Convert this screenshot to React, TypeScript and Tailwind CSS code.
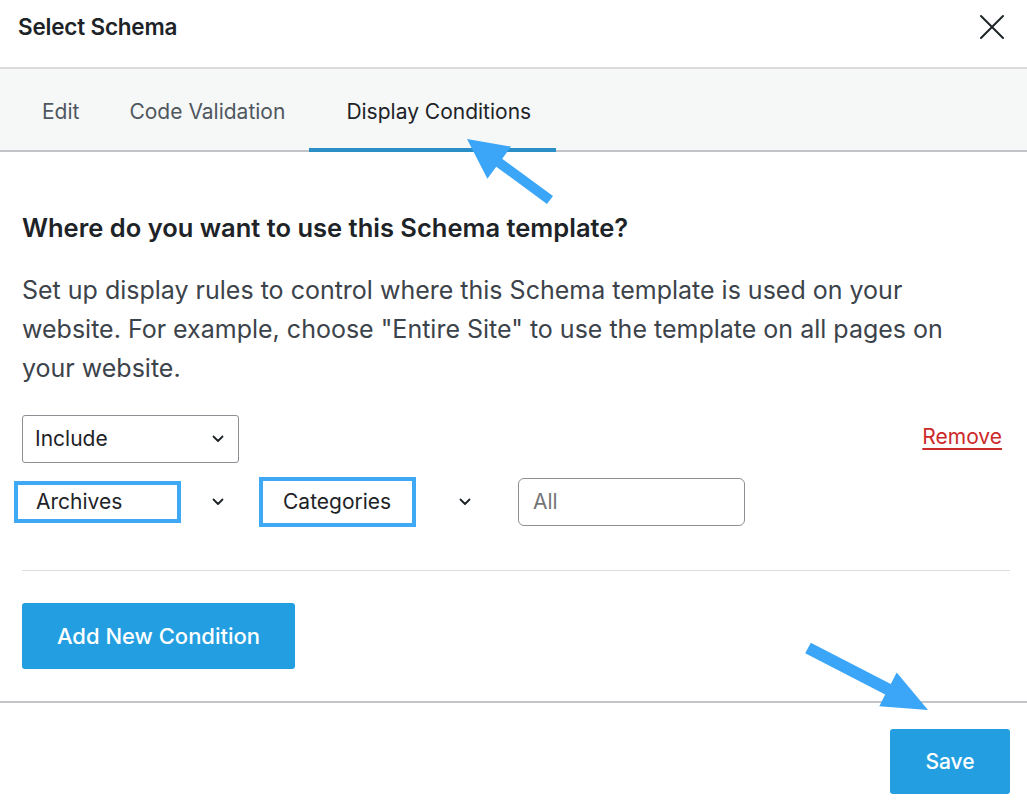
import React from "react";

function Chevron({ className = "" }: { className?: string }) {
  return (
    <svg width="12" height="8" viewBox="0 0 12 8" className={className}>
      <path d="M1.5 1.5 L6 6 L10.5 1.5" fill="none" stroke="#1d2327" strokeWidth="1.8" strokeLinecap="round" strokeLinejoin="round" />
    </svg>
  );
}

export default function App() {
  return (
    <div
      className="relative w-[1027px] h-[810px] overflow-hidden bg-white text-[#1d2327]"
      style={{ fontFamily: "Inter, 'Noto Sans', sans-serif" }}
    >
      {/* header */}
      <div className="h-[69px] flex items-center justify-between pl-[18px] pr-[22px] pb-[14px] border-b-2 border-[#dcdcde]">
        <h1 className="text-[22.5px] font-semibold tracking-[-0.2px]">Select Schema</h1>
        <svg width="26" height="26" viewBox="0 0 26 26">
          <path d="M2 2 L24 24 M24 2 L2 24" stroke="#1d2327" strokeWidth="2" strokeLinecap="round" />
        </svg>
      </div>

      {/* tabs */}
      <div className="h-[83px] flex bg-[#f6f7f7] border-b-2 border-[#c3c4c7] text-[21px] pl-[42px] pt-[4px]">
        <div className="flex items-center text-[#50575e]">Edit</div>
        <div className="flex items-center text-[#50575e] ml-[50px]">Code Validation</div>
        <div className="flex items-center ml-[24px] pl-[37px] pr-[25px] border-b-4 border-[#2b8fc7] mb-[-2px] pt-[2px] text-[#1d2327]">
          Display Conditions
        </div>
      </div>

      {/* content */}
      <div className="px-[22px]">
        <h2 className="mt-[61px] text-[25.5px] font-semibold leading-[30px]">
          Where do you want to use this Schema template?
        </h2>
        <p className="mt-[28px] text-[25px] leading-[39px] text-[#3c434a]">
          Set up display rules to control where this Schema template is used on your
          <br />
          website. For example, choose "Entire Site" to use the template on all pages on
          <br />
          your website.
        </p>

        <div className="mt-[27px] flex items-center justify-between">
          <div className="w-[217px] h-[48px] border border-[#8c8f94] rounded-[3px] flex items-center justify-between pl-[12px] pr-[14px] text-[21px]">
            <span>Include</span>
            <Chevron />
          </div>
          <a className="text-[21px] text-[#cc2929] underline underline-offset-[4px] mr-[3px] -mt-[4px]">Remove</a>
        </div>

        <div className="mt-[14px] flex items-center h-[50px] text-[21px]">
          <div className="ml-[-8px] w-[167px] h-[42px] border-4 border-[#3fa9f5] flex items-center pl-[18px]">
            Archives
          </div>
          <Chevron className="ml-[31px]" />
          <div className="ml-[35px] w-[157px] h-[50px] border-4 border-[#3fa9f5] flex items-center pl-[20px]">
            Categories
          </div>
          <Chevron className="ml-[43px]" />
          <div className="ml-[47px] w-[227px] h-[48px] border border-[#8c8f94] rounded-[6px] flex items-center pl-[14px] text-[#757575]">
            All
          </div>
        </div>

        <div className="mt-[43px] border-t border-[#dcdcde] mr-[-5px]" />

        <button className="mt-[32px] w-[273px] h-[66px] rounded-[3px] bg-[#239fe1] text-white text-[22px] font-medium">
          Add New Condition
        </button>
      </div>

      {/* footer */}
      <div className="mt-[32px] border-t-2 border-[#c3c4c7] flex justify-end pr-[17px] pt-[26px]">
        <button className="w-[120px] h-[65px] rounded-[3px] bg-[#239fe1] text-white text-[21px] font-medium">
          Save
        </button>
      </div>

      {/* annotation arrows */}
      <svg className="absolute left-0 top-0 pointer-events-none" width="1027" height="810" viewBox="0 0 1027 810">
        <polygon
          points="467,139 511,146.6 502.2,158.7 553,196 547,204 496.2,166.7 487.4,178.8"
          fill="#3ba6f7"
        />
        <polygon
          points="928,710 879.3,706.2 885.2,694.6 805.2,653.3 810.8,642.7 890.8,684 896.7,672.4"
          fill="#3ba6f7"
        />
      </svg>
    </div>
  );
}
